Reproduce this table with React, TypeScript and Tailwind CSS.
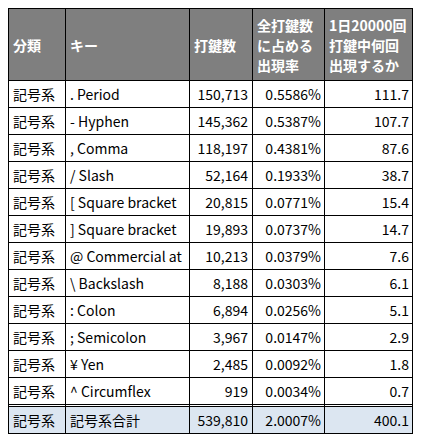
const rows: [string, string, string, string][] = [
  [". Period", "150,713", "0.5586%", "111.7"],
  ["- Hyphen", "145,362", "0.5387%", "107.7"],
  [", Comma", "118,197", "0.4381%", "87.6"],
  ["/ Slash", "52,164", "0.1933%", "38.7"],
  ["[ Square bracket", "20,815", "0.0771%", "15.4"],
  ["] Square bracket", "19,893", "0.0737%", "14.7"],
  ["@ Commercial at", "10,213", "0.0379%", "7.6"],
  ["\\ Backslash", "8,188", "0.0303%", "6.1"],
  [": Colon", "6,894", "0.0256%", "5.1"],
  ["; Semicolon", "3,967", "0.0147%", "2.9"],
  ["¥ Yen", "2,485", "0.0092%", "1.8"],
  ["^ Circumflex", "919", "0.0034%", "0.7"],
];

const head =
  "flex items-center px-1 bg-[#7f7f7f] text-white font-bold leading-[20px] border-r border-b border-black h-[72px]";

export default function App() {
  return (
    <div
      className="p-2 bg-white text-black text-[14px]"
      style={{ fontFamily: '"Noto Sans CJK JP", "Noto Sans", sans-serif' }}
    >
      <div className="grid grid-cols-[57px_124px_63px_72px_88px] w-fit border-l border-t border-black">
        <div className={head}>分類</div>
        <div className={head}>キー</div>
        <div className={head}>打鍵数</div>
        <div className={head}>
          全打鍵数
          <br />
          に占める
          <br />
          出現率
        </div>
        <div className={head}>
          1日20000回
          <br />
          打鍵中何回
          <br />
          出現するか
        </div>

        {rows.map(([key, count, rate, per], i) => {
          const last = i === rows.length - 1;
          const cell = last
            ? "flex items-center border-r border-black h-[26px]"
            : "flex items-center border-r border-b border-black h-[27px]";
          return [
            <div key={i + "a"} className={cell + " px-1"}>
              記号系
            </div>,
            <div key={i + "b"} className={cell + " px-1 whitespace-nowrap"}>
              {key}
            </div>,
            <div key={i + "c"} className={cell + " justify-end pr-1"}>
              {count}
            </div>,
            <div key={i + "d"} className={cell + " justify-end pr-[3px]"}>
              {rate}
            </div>,
            <div key={i + "e"} className={cell + " justify-end pr-[3px]"}>
              {per}
            </div>,
          ];
        })}

        {[
          ["記号系", "px-1"],
          ["記号系合計", "px-1"],
          ["539,810", "justify-end pr-1"],
          ["2.0007%", "justify-end pr-[3px]"],
          ["400.1", "justify-end pr-[3px]"],
        ].map(([t, c]) => (
          <div
            key={t}
            className={
              "flex items-center h-[30px] bg-[#dce6f1] bg-clip-padding border-t-[3px] border-double border-r border-b border-black " +
              c
            }
          >
            {t}
          </div>
        ))}
      </div>
    </div>
  );
}
